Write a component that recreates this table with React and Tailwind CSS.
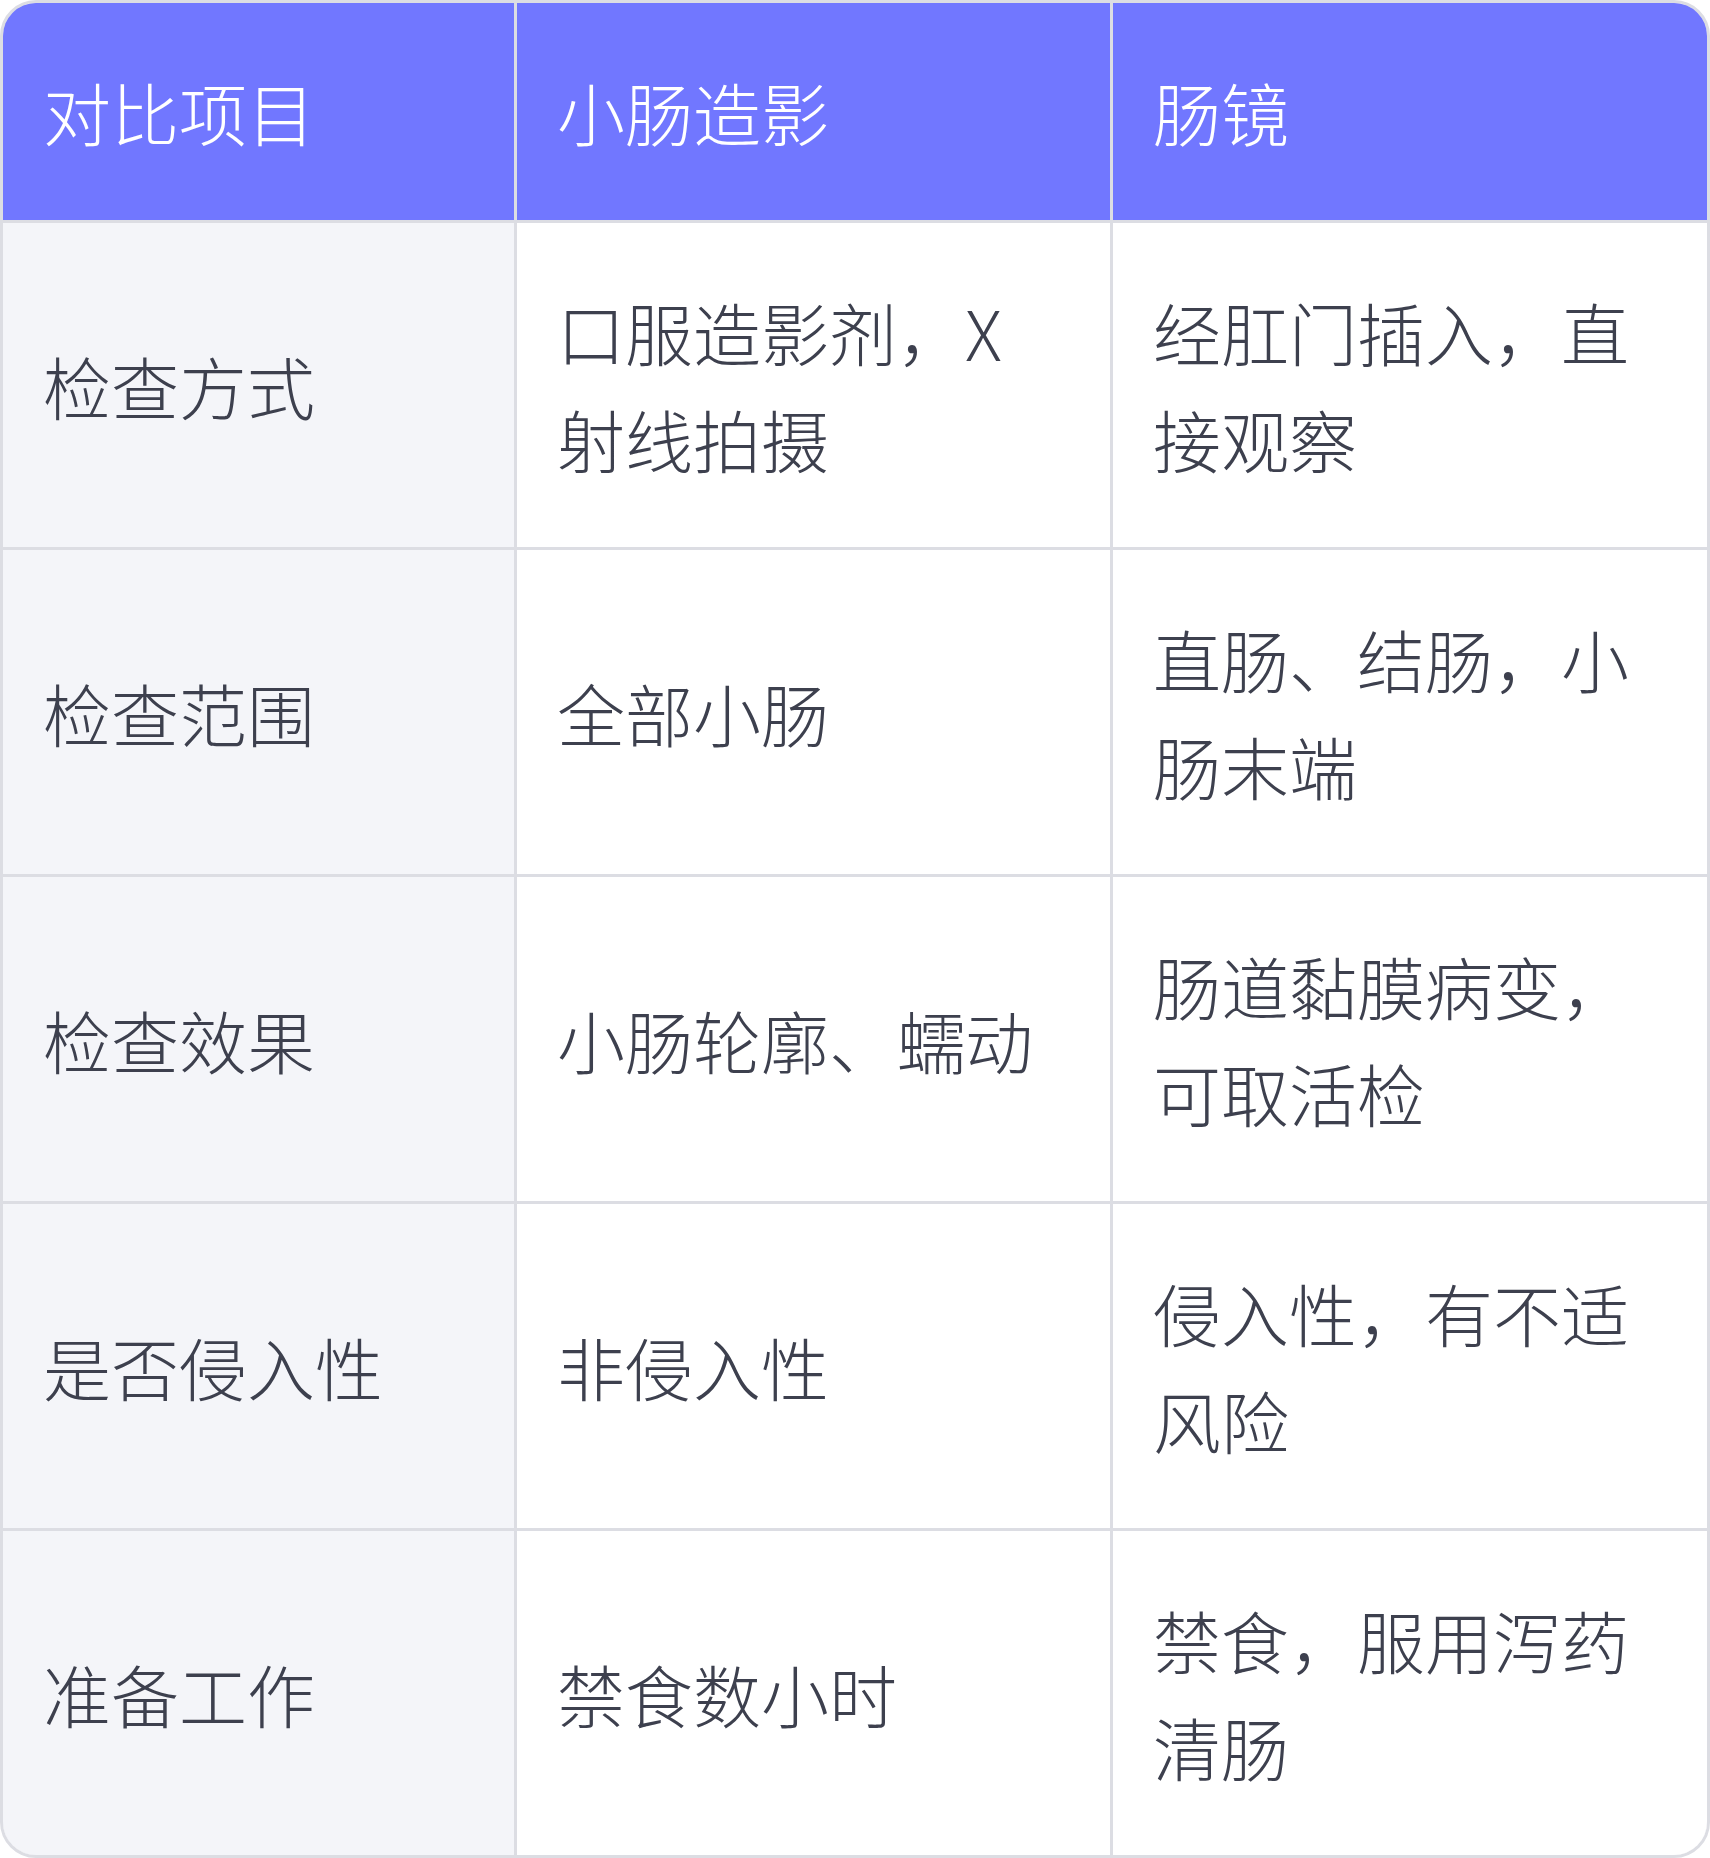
import { Fragment } from "react";

export default function App() {
  const rows = [
    ["检查方式", "口服造影剂，X射线拍摄", "经肛门插入，直接观察"],
    ["检查范围", "全部小肠", "直肠、结肠，小肠末端"],
    ["检查效果", "小肠轮廓、蠕动", "肠道黏膜病变，可取活检"],
    ["是否侵入性", "非侵入性", "侵入性，有不适风险"],
    ["准备工作", "禁食数小时", "禁食，服用泻药清肠"],
  ];
  const font = { fontFamily: '"Noto Sans CJK SC", "Noto Sans", sans-serif' };
  const cell = "pl-[40px] pr-[44px] py-[55px] text-[68px] leading-[107px] flex items-center font-light";
  return (
    <div className="w-[1710px] bg-white" style={font}>
      <div className="border-[3px] border-[#dcdde3] rounded-[36px] overflow-hidden">
        <div className="grid grid-cols-[511px_593px_594px] gap-[3px] bg-[#dcdde3]">
          <div className={`${cell} bg-[#7177ff] text-white`}>对比项目</div>
          <div className={`${cell} bg-[#7177ff] text-white`}>小肠造影</div>
          <div className={`${cell} bg-[#7177ff] text-white`}>肠镜</div>
          {rows.map((r, i) => (
            <Fragment key={i}>
              <div className={`${cell} bg-[#f4f5f9] text-[#3d404e]`}>{r[0]}</div>
              <div className={`${cell} bg-white text-[#3d404e]`}>{r[1]}</div>
              <div className={`${cell} bg-white text-[#3d404e]`}>{r[2]}</div>
            </Fragment>
          ))}
        </div>
      </div>
    </div>
  );
}
